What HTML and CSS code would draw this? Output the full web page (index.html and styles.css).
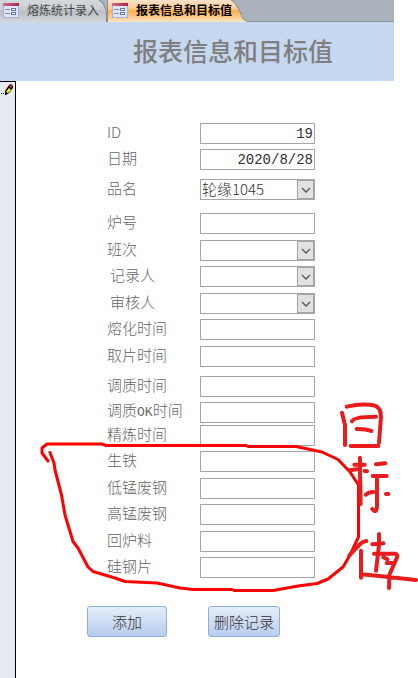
FILE: index.html
```html
<!DOCTYPE html>
<html lang="zh-CN">
<head>
    <meta charset="UTF-8">
    <meta name="viewport" content="width=device-width, initial-scale=1.0">
    <title>报表信息和目标值</title>
    <link rel="stylesheet" href="styles.css">
</head>
<body>
    <svg class="defs" width="0" height="0">
        <defs>
            <linearGradient id="tab-grey" x1="0" y1="0" x2="0" y2="1">
                <stop offset="0" stop-color="#d5d8dc"/>
                <stop offset="0.45" stop-color="#c9cdd2"/>
                <stop offset="0.5" stop-color="#b9bec5"/>
                <stop offset="1" stop-color="#d3d6da"/>
            </linearGradient>
            <linearGradient id="tab-orange" x1="0" y1="0" x2="0" y2="1">
                <stop offset="0" stop-color="#fbe3cb"/>
                <stop offset="0.4" stop-color="#fdc98c"/>
                <stop offset="0.5" stop-color="#ffad4b"/>
                <stop offset="1" stop-color="#fae3c4"/>
            </linearGradient>
            <linearGradient id="icon-top" x1="0" y1="0" x2="1" y2="0">
                <stop offset="0" stop-color="#cf6c8c"/>
                <stop offset="1" stop-color="#a3264f"/>
            </linearGradient>
            <symbol id="form-icon" viewBox="0 0 16 15">
                <rect x="0.5" y="0.5" width="15" height="14" fill="#dfe6f7" stroke="#a9b1d0"/>
                <rect x="0" y="0" width="16" height="3" fill="url(#icon-top)"/>
                <path d="M2 6.5h5M2 10.5h5" stroke="#7f8fbe"/>
                <rect x="8.5" y="5.5" width="4" height="2" fill="#fff" stroke="#6573ab"/>
                <rect x="8.5" y="9.5" width="4" height="2" fill="#fff" stroke="#6573ab"/>
            </symbol>
            <symbol id="arrow" viewBox="0 0 10 6">
                <path d="M1 1l4 4 4-4" fill="none" stroke="#555" stroke-width="1.3"/>
            </symbol>
        </defs>
    </svg>

    <nav class="tabs">
        <a class="tab" href="#">
            <svg class="tab-shape" viewBox="0 0 107 22" preserveAspectRatio="none"><path d="M0 0H99Q104 2 106.5 12V22H0z" fill="url(#tab-grey)"/><path d="M99 0Q104 2 106.5 12V22" fill="none" stroke="#858b93"/></svg>
            <svg class="tab-icon"><use href="#form-icon"/></svg>
            <span>熔炼统计录入</span>
        </a>
        <a class="tab active" href="#">
            <svg class="tab-shape" viewBox="0 0 141 22" preserveAspectRatio="none"><path d="M0 0H124Q129 2 133 12Q136 21 141 21.5V22H0z" fill="url(#tab-orange)"/><path d="M0.5 22V0M124 0Q129 2 133 12Q136 21 141 21.5" fill="none" stroke="#8b9097"/></svg>
            <svg class="tab-icon"><use href="#form-icon"/></svg>
            <span>报表信息和目标值</span>
        </a>
    </nav>

    <header>
        <h1>报表信息和目标值</h1>
    </header>

    <main>
        <aside class="selector">
            <svg width="13" height="12" viewBox="0 0 13 12">
                <path d="M0 9h1v1H0zM2 9h1v1H2z" fill="#000"/>
                <path d="M4 11V7l4-6 2-1 2 2v2L8 9l-3 2z" fill="#000"/>
                <path d="M5 8l3-4 2 2-3 3z" fill="#ff0"/>
                <path d="M8 2l2-1 1 1v1l-1 1z" fill="#e33"/>
            </svg>
        </aside>
        <form>
            <div class="row">
                <label for="id">ID</label>
                <input type="text" id="id" class="number" value="19">
            </div>
            <div class="row">
                <label for="date">日期</label>
                <input type="text" id="date" class="number" value="2020/8/28">
            </div>
            <div class="row medium">
                <label for="product">品名</label>
                <div class="combo"><select id="product"><option>轮缘1045</option></select><span class="drop"><svg><use href="#arrow"/></svg></span></div>
            </div>
            <div class="row large">
                <label for="furnace">炉号</label>
                <input type="text" id="furnace">
            </div>
            <div class="row loose">
                <label for="shift">班次</label>
                <div class="combo"><select id="shift"><option></option></select><span class="drop"><svg><use href="#arrow"/></svg></span></div>
            </div>
            <div class="row">
                <label for="recorder" class="indent">记录人</label>
                <div class="combo"><select id="recorder"><option></option></select><span class="drop"><svg><use href="#arrow"/></svg></span></div>
            </div>
            <div class="row loose">
                <label for="reviewer" class="indent">审核人</label>
                <div class="combo"><select id="reviewer"><option></option></select><span class="drop"><svg><use href="#arrow"/></svg></span></div>
            </div>
            <div class="row">
                <label for="melt">熔化时间</label>
                <input type="text" id="melt">
            </div>
            <div class="row loose">
                <label for="sample">取片时间</label>
                <input type="text" id="sample">
            </div>
            <div class="row medium">
                <label for="adjust">调质时间</label>
                <input type="text" id="adjust">
            </div>
            <div class="row">
                <label for="adjust-ok">调质<span class="latin">OK</span>时间</label>
                <input type="text" id="adjust-ok">
            </div>
            <div class="row tight">
                <label for="refine">精炼时间</label>
                <input type="text" id="refine">
            </div>
            <!-- 目标值 -->
            <div class="row">
                <label for="pig-iron">生铁</label>
                <input type="text" id="pig-iron">
            </div>
            <div class="row loose">
                <label for="low-mn">低锰废钢</label>
                <input type="text" id="low-mn">
            </div>
            <div class="row">
                <label for="high-mn">高锰废钢</label>
                <input type="text" id="high-mn">
            </div>
            <div class="row loose">
                <label for="returns">回炉料</label>
                <input type="text" id="returns">
            </div>
            <div class="row">
                <label for="silicon">硅钢片</label>
                <input type="text" id="silicon">
            </div>
            <div class="buttons">
                <button type="button" class="add">添加</button>
                <button type="button" class="delete">删除记录</button>
            </div>
        </form>
    </main>

    <!-- 手写标注 -->
    <svg class="marks" width="418" height="678" viewBox="0 0 418 678">
        <path class="loop" d="M48 461L42 453V448L47 444H102L106 445.5H246L248 446.5H296L322 452L338 459.5L350 472L358.5 485V537L350 555L343 567L328 579L317 583.5L298 586L273 590.5H234L232 589.5H193L180 588L157 583L125 581.5L115 578L93 571.5L88 567L78 548L73 541.5L65 515L61.5 495L55 470L54 463L50 452.5"/>
        <g class="hand" transform="translate(320 390) scale(0.3333)">
            <path d="M80 50Q130 38 165 47Q183 55 183 80L177 158M66 68L75 105V165M92 168H175M96 94Q100 80 168 80M110 117Q135 116 154 123"/>
            <path d="M120 203V245L122 342M103 224H134M90 241L120 236M134 243L141 244M168 223L196 220M158 258H200M171 260V345Q171 374 157 357M138 314Q145 306 160 306M198 312H205"/>
            <path d="M139 453Q125 455 113 470L88 496M123 482V563M125 553L170 557L288 570M177 432V465L168 542M157 463L190 460M162 491H225Q235 492 230 505L208 555L207 594M190 502L202 508M200 519H218"/>
        </g>
    </svg>
</body>
</html>
```
FILE: styles.css
```css
* {
    margin: 0;
    padding: 0;
    box-sizing: border-box;
}

body {
    display: flex;
    flex-direction: column;
    min-height: 100vh;
    padding-right: 24px;
    position: relative;
    background-color: #fff;
    color: #7f7f7f;
    font-family: "Noto Sans CJK SC", sans-serif;
    font-size: 15px;
}

.defs {
    position: absolute;
}

.tabs {
    display: flex;
    height: 22px;
    background-color: #abb2bd;
    border-bottom: 1px solid #8b939d;
}

.tab {
    display: flex;
    align-items: center;
    gap: 8px;
    height: 22px;
    padding: 0 8px 2px 3px;
    position: relative;
    color: #444;
    font-size: 12px;
    line-height: 18px;
    text-decoration: none;
    white-space: nowrap;
}

.tab.active {
    padding-left: 5px;
    padding-right: 16px;
    color: #000;
    font-weight: bold;
}

.tab-shape {
    position: absolute;
    left: 0;
    top: 0;
    width: 100%;
    height: 100%;
}

.tab-icon {
    width: 16px;
    height: 15px;
    position: relative;
}

.tab span {
    position: relative;
}

header {
    padding: 10px 0 13px 133px;
    background-color: #c6d8f0;
}

h1 {
    font-size: 25px;
    font-weight: 500;
    line-height: 36px;
    white-space: nowrap;
}

main {
    display: flex;
    flex: 1;
}

.selector {
    width: 16px;
    padding: 2px 0 0 1px;
    background-color: #e8ebf1;
    border-top: 1px solid #000;
    border-right: 1px solid #000;
    line-height: 0;
}

form {
    flex: 1;
    padding: 37px 0 0 71px;
    font-weight: 300;
}

.row {
    display: flex;
    align-items: center;
    height: 21px;
    margin-top: 5px;
    padding-left: 20px;
}

.row.tight {
    margin-top: 2px;
}

.row.loose {
    margin-top: 6px;
}

.row.medium {
    margin-top: 9px;
}

.row.large {
    margin-top: 13px;
}

label {
    width: 93px;
    padding-bottom: 4px;
    color: #666;
    line-height: 17px;
    white-space: nowrap;
}

label.indent {
    padding-left: 3px;
}

.latin {
    font-family: "Liberation Mono", monospace;
    font-size: 13px;
}

input,
select {
    width: 115px;
    height: 21px;
    padding: 0 2px;
    background-color: #fff;
    border: 1px solid #a5a5a5;
    border-radius: 0;
    color: #303030;
    font-family: "Noto Sans CJK SC", sans-serif;
    font-size: 15px;
    font-weight: 300;
}

.number {
    padding-right: 1px;
    font-family: "Liberation Mono", monospace;
    font-size: 14px;
    text-align: right;
}

.combo {
    display: flex;
    position: relative;
}

select {
    padding: 0 1px 2px;
    appearance: none;
    line-height: 17px;
}

.drop {
    display: flex;
    align-items: center;
    justify-content: center;
    position: absolute;
    right: 1px;
    top: 1px;
    width: 17px;
    height: 19px;
    background-color: #e1e1e1;
    border: 1px solid #a5a5a5;
    pointer-events: none;
}

.drop svg {
    width: 10px;
    height: 6px;
}

.buttons {
    display: flex;
    gap: 41px;
    margin-top: 28px;
}

button {
    height: 31px;
    background: linear-gradient(#e6edf9, #b7cdef);
    border: 1px solid #8fb0da;
    border-radius: 3px;
    color: #303030;
    font-family: inherit;
    font-size: 15px;
    font-weight: 300;
    white-space: nowrap;
}

.add {
    width: 80px;
}

.delete {
    width: 72px;
}

.marks {
    position: absolute;
    left: 0;
    top: 0;
    pointer-events: none;
}

.loop,
.hand {
    fill: none;
    stroke-linecap: round;
    stroke-linejoin: round;
}

.loop {
    stroke: #f00;
    stroke-width: 3;
}

.hand {
    stroke: #e81c1c;
    stroke-width: 12;
}
```
